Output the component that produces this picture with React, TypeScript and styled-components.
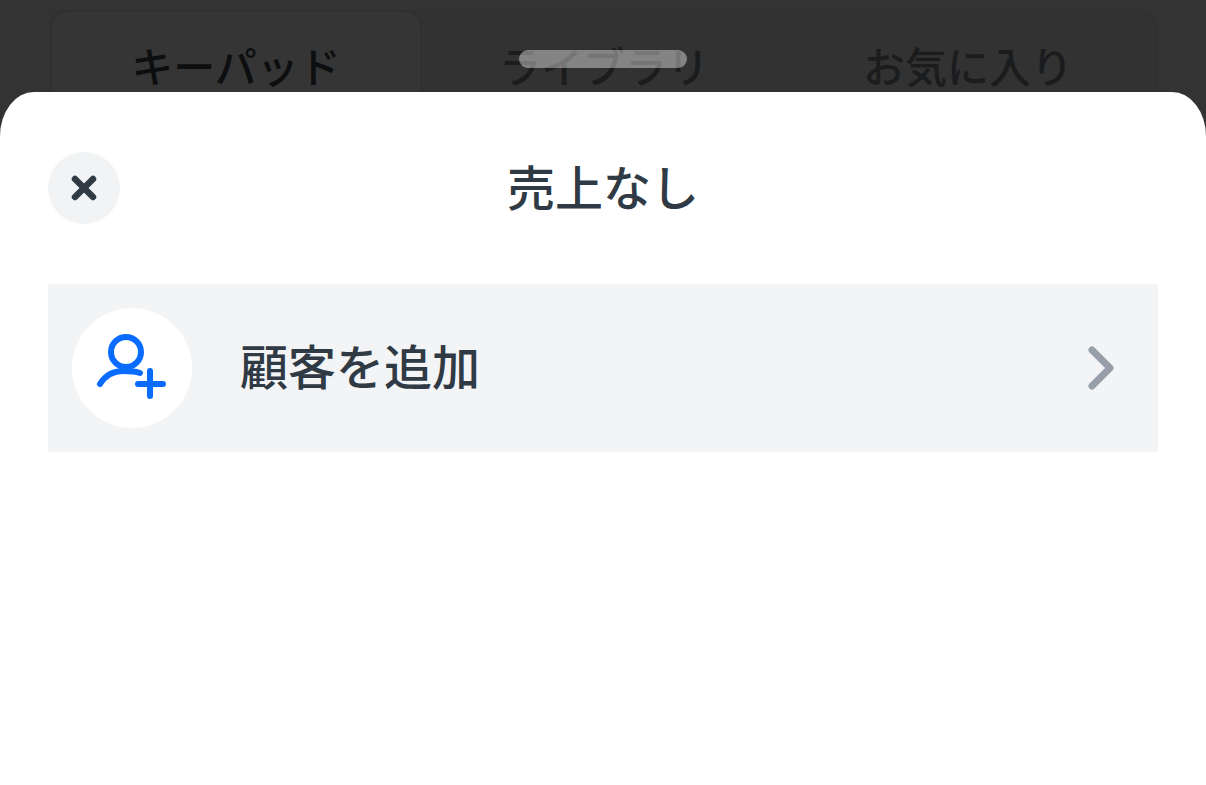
import * as React from "react";
import styled, { createGlobalStyle } from "styled-components";

const GlobalStyle = createGlobalStyle`
  html, body {
    margin: 0;
    padding: 0;
    height: 100%;
    background: #fff;
    font-family: "Noto Sans CJK JP", "Noto Sans", sans-serif;
  }
  #root {
    height: 100%;
  }
`;

const Page = styled.div`
  height: 785px;
  display: flex;
  flex-direction: column;
  overflow: hidden;
  background: #333333;
`;

const Backdrop = styled.div`
  position: relative;
  flex: 0 0 92px;
  box-sizing: border-box;
  padding: 12px 50px 0 52px;
`;

const TabBar = styled.div`
  display: grid;
  grid-template-columns: 368px 368px 1fr;
  height: 80px;
  padding-right: 8px;
  border-radius: 14px 14px 0 0;
  background: #323232;
  box-shadow: 0 0 0 1px #303030;
`;

const Tab = styled.div<{ $active?: boolean }>`
  box-sizing: border-box;
  padding-top: 28px;
  height: 100%;
  border-radius: 14px 14px 0 0;
  text-align: center;
  font-size: 42px;
  font-weight: 500;
  line-height: 50px;
  white-space: nowrap;
  color: ${(p) => (p.$active ? "#0d0e0f" : "#1b1c1d")};
  background: ${(p) => (p.$active ? "#353535" : "transparent")};
  box-shadow: ${(p) => (p.$active ? "0 0 0 2px #303030" : "none")};
`;

const Grabber = styled.div`
  position: absolute;
  left: 519px;
  top: 50px;
  width: 168px;
  height: 18px;
  border-radius: 9px;
  background: rgba(255, 255, 255, 0.4);
`;

const Sheet = styled.div`
  position: relative;
  flex: 1;
  padding: 60px 48px 0;
  background: #fff;
  border-radius: 34px 34px 0 0 / 44px 44px 0 0;
`;

const SheetHeader = styled.div`
  display: grid;
  grid-template-columns: 72px 1fr 72px;
  align-items: center;
  height: 72px;
`;

const CloseButton = styled.button`
  width: 72px;
  height: 72px;
  padding: 0;
  border: none;
  border-radius: 50%;
  background: #f2f3f5;
  display: flex;
  align-items: center;
  justify-content: center;
`;

const Title = styled.h1`
  margin: 0;
  padding-bottom: 6px;
  text-align: center;
  font-size: 48px;
  font-weight: 500;
  line-height: 66px;
  color: #2f3a45;
`;

const ActionRow = styled.div`
  margin-top: 60px;
  display: flex;
  align-items: center;
  height: 168px;
  padding: 0 42px 0 24px;
  background: #f3f4f6;
`;

const IconCircle = styled.div`
  width: 120px;
  height: 120px;
  flex: none;
  border-radius: 50%;
  background: #fff;
  display: flex;
  align-items: center;
  justify-content: center;
`;

const RowLabel = styled.span`
  flex: 1;
  margin-left: 48px;
  padding-bottom: 9px;
  font-size: 48px;
  font-weight: 500;
  line-height: 66px;
  color: #2f3a45;
`;

export default function App() {
  return (
    <Page>
      <GlobalStyle />
      <Backdrop>
        <TabBar>
          <Tab $active>キーパッド</Tab>
          <Tab>ライブラリ</Tab>
          <Tab>お気に入り</Tab>
        </TabBar>
        <Grabber />
      </Backdrop>
      <Sheet>
        <SheetHeader>
          <CloseButton aria-label="閉じる">
            <svg width="26" height="26" viewBox="0 0 26 26" fill="none">
              <path d="M4 4L22 22M22 4L4 22" stroke="#2f3a45" strokeWidth="6.5" strokeLinecap="round" />
            </svg>
          </CloseButton>
          <Title>売上なし</Title>
          <span />
        </SheetHeader>
        <ActionRow>
          <IconCircle>
            <svg width="72" height="68" viewBox="0 0 72 68" fill="none" stroke="#0a6cff" strokeWidth="6" strokeLinecap="round">
              <circle cx="30" cy="18" r="15" />
              <path d="M4 50C9 42 17 37 27 37C33 37 39 37 44 39" />
              <path d="M42 50H67M54 37V62" />
            </svg>
          </IconCircle>
          <RowLabel>顧客を追加</RowLabel>
          <svg width="28" height="44" viewBox="0 0 28 44" fill="none">
            <path d="M4 4L22 22L4 40" stroke="#97a0a8" strokeWidth="7" strokeLinecap="round" strokeLinejoin="round" />
          </svg>
        </ActionRow>
      </Sheet>
    </Page>
  );
}
